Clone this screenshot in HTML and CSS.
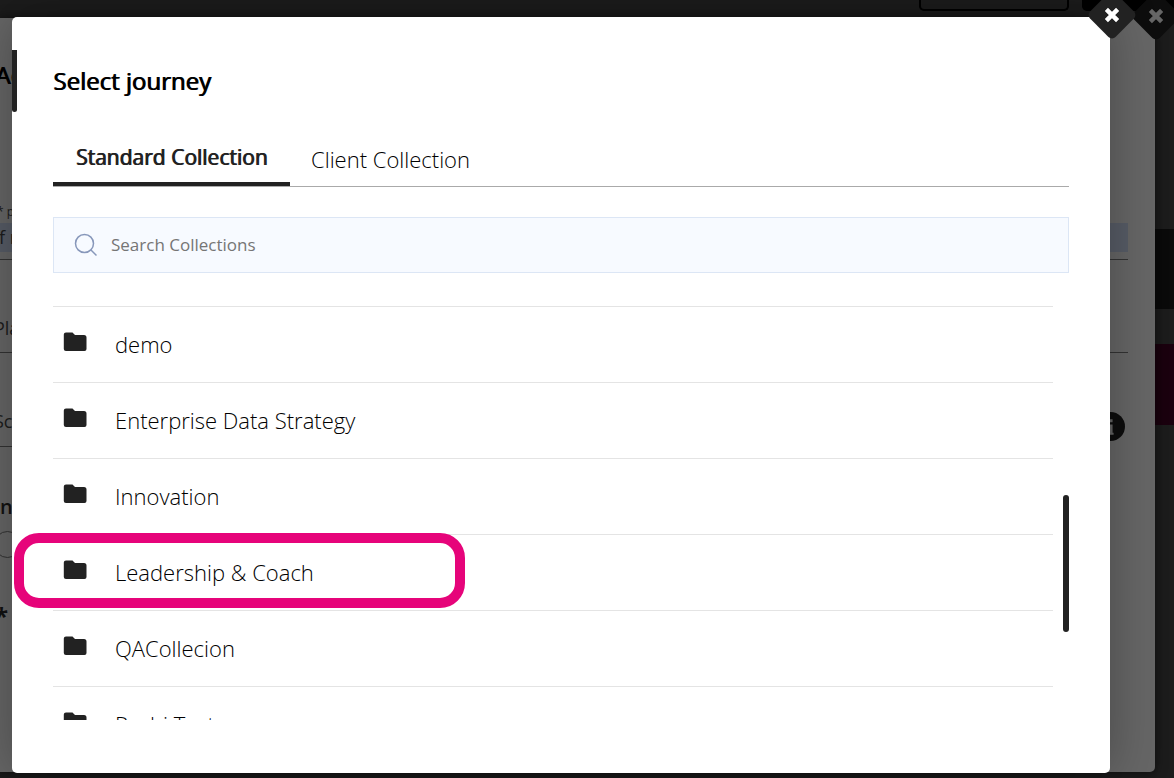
FILE: index.html
```html
<!DOCTYPE html>
<html lang="en">
<head>
<meta charset="utf-8">
<title>Select journey</title>
<link rel="stylesheet" href="styles.css">
</head>
<body>
<svg class="defs" aria-hidden="true">
  <symbol id="folder" viewBox="0 0 24 20"><path d="M3 0.5H9.500L12 3H21Q23.500 3 23.500 5.500V17Q23.500 19 21.500 19H3Q.8 19 .8 17V2.500Q.8.5 3 .5Z"/></symbol>
  <symbol id="cross" viewBox="0 0 16 16"><path d="M3 3L13 13M13 3L3 13" fill="none" stroke="currentColor" stroke-width="4"/></symbol>
</svg>

<div class="backdrop" aria-hidden="true">
  <div class="topbar"><span class="top-outline"></span><span class="top-solid"></span></div>
  <div class="side-tile side-dark"></div>
  <div class="side-tile side-wine"></div>
  <div class="panel">
    <div class="panel-title">Ac</div>
    <div class="panel-hint">* p</div>
    <div class="panel-field panel-first"><span class="panel-value">f r</span></div>
    <div class="panel-field">Pla</div>
    <div class="panel-field panel-short">Sc</div>
    <div class="panel-label">n</div>
    <div class="panel-radio"></div>
    <div class="panel-star">*</div>
    <span class="info"><svg viewBox="0 0 28 28"><circle cx="14" cy="14" r="14" fill="#0d0d0d"/><path d="M11 7h5v3h-5zM10 12h6v8h1v2h-7v-2h2v-6h-2z" fill="#646464"/></svg></span>
  </div>
  <span class="corner corner-back"><svg class="corner-icon"><use href="#cross"/></svg></span>
</div>

<main class="modal" role="dialog" aria-labelledby="title">
  <button class="corner corner-front" aria-label="Close"><svg class="corner-icon"><use href="#cross"/></svg></button>
  <span class="accent"></span>
  <h1 id="title" class="title">Select journey</h1>
  <div class="tabs" role="tablist">
    <button class="tab tab-active" role="tab" aria-selected="true">Standard Collection</button>
    <button class="tab" role="tab" aria-selected="false">Client Collection</button>
  </div>
  <label class="search">
    <svg class="search-icon" viewBox="0 0 24 24" aria-hidden="true"><circle cx="10.500" cy="10.500" r="9"/><path d="M17 17L22.500 22.500"/></svg>
    <input class="search-input" type="text" placeholder="Search Collections" aria-label="Search Collections">
  </label>
  <div class="scroller">
    <ul class="list">
      <li class="row"><svg class="folder"><use href="#folder"/></svg><span class="name">demo</span></li>
      <li class="row"><svg class="folder"><use href="#folder"/></svg><span class="name">Enterprise Data Strategy</span></li>
      <li class="row"><svg class="folder"><use href="#folder"/></svg><span class="name">Innovation</span></li>
      <li class="row"><svg class="folder"><use href="#folder"/></svg><span class="name">Leadership &amp; Coach</span></li>
      <li class="row"><svg class="folder"><use href="#folder"/></svg><span class="name">QACollecion</span></li>
      <li class="row"><svg class="folder"><use href="#folder"/></svg><span class="name">Rashi Test</span></li>
    </ul>
    <div class="rail"><div class="thumb"></div></div>
  </div>
  <div class="highlight"></div>
</main>
</body>
</html>
```
FILE: styles.css
```css
* { box-sizing: border-box; }
body {
  margin: 0;
  min-height: 100vh;
  display: flex;
  padding: 17px 64px 5px 12px;
  background: #1c1c1c;
  font-family: "Open Sans", "Noto Sans", sans-serif;
  color: #000;
  overflow: hidden;
}
button { font: inherit; border: 0; background: none; padding: 0; }
.defs { position: absolute; width: 0; height: 0; }

/* dimmed page under the dialog */
.backdrop { position: absolute; inset: 0; overflow: hidden; }
.topbar { display: flex; justify-content: flex-end; gap: 13px; }
.top-outline { width: 150px; height: 11px; border: 2px solid #000; border-top: 0; border-radius: 0 0 5px 5px; }
.top-solid { width: 92px; height: 11px; background: #000; border-radius: 0 0 0 5px; }
.side-tile { position: absolute; right: 0; width: 30px; }
.side-dark { top: 229px; height: 80px; background: #0a0a0a; }
.side-wine { top: 344px; height: 81px; background: #1a000e; }
.panel {
  position: absolute;
  inset: 18px 19px 6px 0;
  padding: 39px 27px 0 0;
  background: #666;
  border-radius: 0 4px 5px 0;
  box-shadow: 0 0 12px rgba(0, 0, 0, .5);
  font-size: 18px;
  color: #1c1c1c;
}
.panel-title { height: 145px; margin-left: -5px; font-size: 24px; line-height: 36px; color: #000; text-shadow: 1px 0 0 #000; }
.panel-hint { height: 21px; margin-left: -3px; font-size: 12px; line-height: 20px; }
.panel-field { height: 93px; line-height: 24px; padding-top: 56px; border-bottom: 1px solid #333; text-indent: -6px; }
.panel-first { height: 37px; padding-top: 0; }
.panel-value { display: block; height: 29px; background: #575c66; line-height: 29px; text-indent: -1px; }
.panel-short { height: 94px; margin-right: 50px; }
.panel-label { height: 84px; padding-top: 44px; font-size: 20px; font-weight: 600; line-height: 32px; color: #111; }
.panel-radio { width: 27px; height: 27px; margin-left: -6px; border: 1px solid #333; border-radius: 50%; }
.panel-star { margin: 40px 0 0 -5px; font-size: 24px; font-weight: 700; line-height: 36px; color: #111; }
.info { position: absolute; right: 30px; top: 394px; width: 29px; height: 29px; }
.info svg { display: block; width: 100%; height: 100%; }

/* diamond close tabs */
.corner {
  position: absolute;
  display: flex;
  align-items: center;
  justify-content: center;
  width: 36px;
  height: 36px;
  border-radius: 5px;
  transform: rotate(45deg);
}
.corner-icon { width: 18px; height: 18px; transform: rotate(45deg); }
.corner-front { top: -20px; right: -20px; background: #222; color: #fff; }
.corner-back { top: -2px; right: 0; background: #0d0d0d; color: #666; }

/* dialog */
.modal {
  position: relative;
  flex: 1;
  display: flex;
  flex-direction: column;
  padding: 44px 41px 53px;
  background: #fff;
  border-radius: 5px;
  box-shadow: 0 0 50px rgba(0, 0, 0, .3);
}
.accent { position: absolute; left: 0; top: 33px; width: 5px; height: 62px; background: #222; border-radius: 0 0 3px 3px; }
.title { margin: 0; font-size: 24px; line-height: 40px; font-weight: 400; text-shadow: 1px 0 0 #000; }
.tabs { display: flex; height: 57px; margin-top: 29px; border-bottom: 1px solid #aaa; }
.tab { min-width: 200px; padding: 2px 21px 0; font-size: 22px; line-height: 30px; font-weight: 300; color: #000; }
.tab-active { min-width: 237px; padding-top: 2px; border-bottom: 4px solid #222; font-size: 21px; font-weight: 400; color: #222; text-shadow: 1px 0 0 #222; }
.search {
  display: flex;
  align-items: center;
  gap: 13px;
  height: 56px;
  margin-top: 30px;
  padding: 0 20px;
  border: 1px solid #dce6f5;
  background: #f7faff;
}
.search-icon { flex: none; width: 24px; height: 24px; fill: none; stroke: #8797ba; stroke-width: 1.5; }
.search-input { flex: 1; min-width: 0; padding: 0; border: 0; outline: 0; background: none; font: 400 17px/24px "Open Sans", sans-serif; color: #222; }
.search-input::placeholder { color: #757575; opacity: 1; }
.scroller { display: flex; flex: 1 1 0; min-height: 0; gap: 10px; margin-top: 33px; }
.list { flex: 1; margin: 0; padding: 0; list-style: none; overflow: hidden; }
.row { display: flex; align-items: center; gap: 28px; height: 76px; padding: 0 0 2px 10px; border-top: 1px solid #e4e4e4; }
.folder { width: 24px; height: 20px; fill: #222; margin-bottom: 3px; }
.name { font-size: 22px; line-height: 30px; font-weight: 300; }
.rail { width: 6px; padding-top: 189px; }
.thumb { height: 137px; border-radius: 3px; background: #222; }
.highlight { position: absolute; left: 2px; top: 516px; width: 451px; height: 75px; border: 10px solid #e6047a; border-radius: 25px; pointer-events: none; }
```
